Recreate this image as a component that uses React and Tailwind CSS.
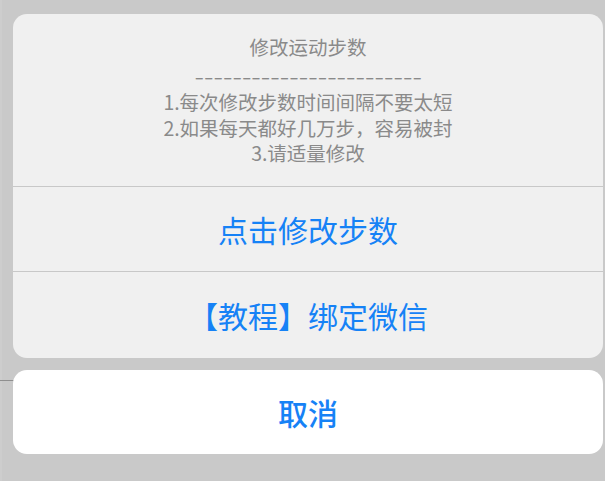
export default function App() {
  return (
    <div
      className="relative w-[605px] h-[481px] bg-[#c9c9c9] overflow-hidden font-['Noto_Sans_CJK_SC',_sans-serif]"
    >
      <div className="absolute left-0 top-0 w-[2px] h-full bg-[#cdcdcd]" />
      <div className="absolute left-0 top-[380px] w-[15px] h-px bg-[#8f8f8f]" />
      <div className="relative flex flex-col pl-[13px] pr-[2px] pt-[14px]">
        <div className="flex flex-col rounded-[14px] bg-[#f0f0f0] overflow-hidden">
          <div className="h-[173px] border-b border-[#c8c8c8] flex flex-col items-center pt-[20px] text-[#8a8a8a] text-[19.5px] leading-[25.5px]">
            <div>修改运动步数</div>
            <div className="mt-[3px] inline-block scale-x-[1.4]">------------------------</div>
            <div className="mt-[1px] text-center">
              <div>1.每次修改步数时间间隔不要太短</div>
              <div>2.如果每天都好几万步，容易被封</div>
              <div>3.请适量修改</div>
            </div>
          </div>
          <div className="h-[85px] border-b border-[#c8c8c8] flex items-center justify-center text-[#1682f6] text-[30px]">
            点击修改步数
          </div>
          <div className="h-[86px] flex items-center justify-center text-[#1682f6] text-[30px]">
            【教程】绑定微信
          </div>
        </div>
        <div className="mt-[12px] h-[84px] rounded-[14px] bg-white flex items-center justify-center text-[#1682f6] text-[30px] font-medium">
          取消
        </div>
      </div>
    </div>
  );
}
